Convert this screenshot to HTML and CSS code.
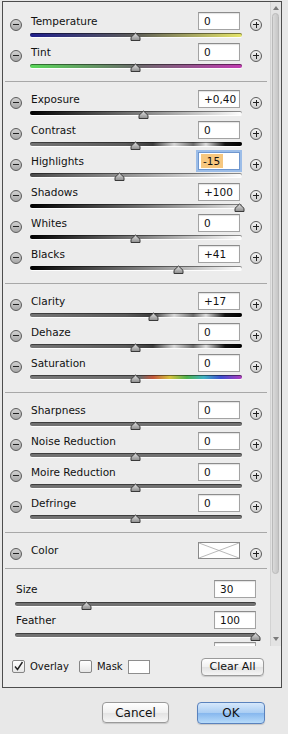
FILE: index.html
```html
<!DOCTYPE html>
<html lang="en">
<head>
    <meta charset="UTF-8">
    <title>Adjustment Brush</title>
    <link rel="stylesheet" href="styles.css">
</head>
<body>
    <svg class="defs" width="0" height="0">
        <defs>
            <linearGradient id="knob-fill" x1="0" y1="0" x2="0" y2="1">
                <stop offset="0" stop-color="#e2e2e2"/>
                <stop offset="1" stop-color="#8c8c8c"/>
            </linearGradient>
            <symbol id="knob" viewBox="0 0 11 9">
                <path d="M1 8.5V5.3L5.5 1 10 5.3v3.2z" fill="url(#knob-fill)" stroke="#3a3a3a" stroke-linejoin="round"/>
            </symbol>
        </defs>
    </svg>

    <div class="panel">
        <div class="scroll">
            <div class="content">
                <div class="group">
                    <div class="row">
                        <span class="round minus"></span>
                        <div class="ctl">
                            <div class="head"><span class="label">Temperature</span><span class="value">0</span></div>
                            <div class="track temp"><svg class="knob" style="left: 50%"><use href="#knob"/></svg></div>
                        </div>
                        <span class="round plus"></span>
                    </div>
                    <div class="row">
                        <span class="round minus"></span>
                        <div class="ctl">
                            <div class="head"><span class="label">Tint</span><span class="value">0</span></div>
                            <div class="track tint"><svg class="knob" style="left: 50%"><use href="#knob"/></svg></div>
                        </div>
                        <span class="round plus"></span>
                    </div>
                </div>
                <div class="sep"></div>
                <div class="group">
                    <div class="row">
                        <span class="round minus"></span>
                        <div class="ctl">
                            <div class="head"><span class="label">Exposure</span><span class="value">+0,40</span></div>
                            <div class="track mono"><svg class="knob" style="left: 54%"><use href="#knob"/></svg></div>
                        </div>
                        <span class="round plus"></span>
                    </div>
                    <div class="row">
                        <span class="round minus"></span>
                        <div class="ctl">
                            <div class="head"><span class="label">Contrast</span><span class="value">0</span></div>
                            <div class="track bands"><svg class="knob" style="left: 50%"><use href="#knob"/></svg></div>
                        </div>
                        <span class="round plus"></span>
                    </div>
                    <div class="row">
                        <span class="round minus"></span>
                        <div class="ctl">
                            <div class="head"><span class="label">Highlights</span><span class="value focus"><span class="selected">-15</span></span></div>
                            <div class="track light"><svg class="knob" style="left: 42.5%"><use href="#knob"/></svg></div>
                        </div>
                        <span class="round plus"></span>
                    </div>
                    <div class="row">
                        <span class="round minus"></span>
                        <div class="ctl">
                            <div class="head"><span class="label">Shadows</span><span class="value">+100</span></div>
                            <div class="track dark"><svg class="knob" style="left: 99%"><use href="#knob"/></svg></div>
                        </div>
                        <span class="round plus"></span>
                    </div>
                    <div class="row">
                        <span class="round minus"></span>
                        <div class="ctl">
                            <div class="head"><span class="label">Whites</span><span class="value">0</span></div>
                            <div class="track mono"><svg class="knob" style="left: 50%"><use href="#knob"/></svg></div>
                        </div>
                        <span class="round plus"></span>
                    </div>
                    <div class="row">
                        <span class="round minus"></span>
                        <div class="ctl">
                            <div class="head"><span class="label">Blacks</span><span class="value">+41</span></div>
                            <div class="track mono"><svg class="knob" style="left: 70.5%"><use href="#knob"/></svg></div>
                        </div>
                        <span class="round plus"></span>
                    </div>
                </div>
                <div class="sep"></div>
                <div class="group">
                    <div class="row">
                        <span class="round minus"></span>
                        <div class="ctl">
                            <div class="head"><span class="label">Clarity</span><span class="value">+17</span></div>
                            <div class="track bands"><svg class="knob" style="left: 58.5%"><use href="#knob"/></svg></div>
                        </div>
                        <span class="round plus"></span>
                    </div>
                    <div class="row">
                        <span class="round minus"></span>
                        <div class="ctl">
                            <div class="head"><span class="label">Dehaze</span><span class="value">0</span></div>
                            <div class="track bands"><svg class="knob" style="left: 50%"><use href="#knob"/></svg></div>
                        </div>
                        <span class="round plus"></span>
                    </div>
                    <div class="row">
                        <span class="round minus"></span>
                        <div class="ctl">
                            <div class="head"><span class="label">Saturation</span><span class="value">0</span></div>
                            <div class="track sat"><svg class="knob" style="left: 50%"><use href="#knob"/></svg></div>
                        </div>
                        <span class="round plus"></span>
                    </div>
                </div>
                <div class="sep"></div>
                <div class="group">
                    <div class="row">
                        <span class="round minus"></span>
                        <div class="ctl">
                            <div class="head"><span class="label">Sharpness</span><span class="value">0</span></div>
                            <div class="track plain"><svg class="knob" style="left: 50%"><use href="#knob"/></svg></div>
                        </div>
                        <span class="round plus"></span>
                    </div>
                    <div class="row">
                        <span class="round minus"></span>
                        <div class="ctl">
                            <div class="head"><span class="label">Noise Reduction</span><span class="value">0</span></div>
                            <div class="track plain"><svg class="knob" style="left: 50%"><use href="#knob"/></svg></div>
                        </div>
                        <span class="round plus"></span>
                    </div>
                    <div class="row">
                        <span class="round minus"></span>
                        <div class="ctl">
                            <div class="head"><span class="label">Moire Reduction</span><span class="value">0</span></div>
                            <div class="track plain"><svg class="knob" style="left: 50%"><use href="#knob"/></svg></div>
                        </div>
                        <span class="round plus"></span>
                    </div>
                    <div class="row">
                        <span class="round minus"></span>
                        <div class="ctl">
                            <div class="head"><span class="label">Defringe</span><span class="value">0</span></div>
                            <div class="track plain"><svg class="knob" style="left: 50%"><use href="#knob"/></svg></div>
                        </div>
                        <span class="round plus"></span>
                    </div>
                </div>
                <div class="sep"></div>
                <div class="row row-color">
                    <span class="round minus"></span>
                    <div class="ctl">
                        <div class="head">
                            <span class="label">Color</span>
                            <svg class="swatch" width="42" height="17" viewBox="0 0 42 17">
                                <rect x="0.5" y="0.5" width="41" height="16" fill="#fff" stroke="#8a8a8a"/>
                                <path d="M1 1L41 16M41 1L1 16" stroke="#a8a8a8" stroke-width="0.8"/>
                            </svg>
                        </div>
                    </div>
                    <span class="round plus"></span>
                </div>
                <div class="sep"></div>
                <div class="brush">
                    <div class="brush-row">
                        <div class="head"><span class="label">Size</span><span class="value">30</span></div>
                        <div class="track plain"><svg class="knob" style="left: 30%"><use href="#knob"/></svg></div>
                    </div>
                    <div class="brush-row">
                        <div class="head"><span class="label">Feather</span><span class="value">100</span></div>
                        <div class="track plain"><svg class="knob" style="left: 100%"><use href="#knob"/></svg></div>
                    </div>
                    <!-- next row only peeks in under the fold -->
                    <div class="brush-row">
                        <div class="head"><span class="label"></span><span class="value"></span></div>
                    </div>
                </div>
            </div>
            <div class="scrollbar">
                <span class="sb-up"></span>
                <span class="sb-thumb"></span>
                <span class="sb-rest"></span>
                <span class="sb-down"></span>
            </div>
        </div>
        <div class="footer">
            <label class="check">
                <span class="box">
                    <svg width="11" height="11" viewBox="0 0 11 11"><path d="M2 5.5L4.5 8.5 9.5 1" fill="none" stroke="#222" stroke-width="1.4"/></svg>
                </span>
                Overlay
            </label>
            <label class="check"><span class="box"></span>Mask</label>
            <span class="mask-color"></span>
            <button class="btn btn-small">Clear All</button>
        </div>
    </div>

    <div class="actions">
        <button class="btn">Cancel</button>
        <button class="btn btn-ok">OK</button>
    </div>
</body>
</html>
```

FILE: styles.css
```css
html, body {
    margin: 0;
    padding: 0;
}

body {
    background-color: #e8e8e8;
    font-family: "DejaVu Sans", sans-serif;
    font-size: 10.5px;
    color: #111;
    width: 288px;
    height: 734px;
    overflow: hidden;
}

.defs {
    position: absolute;
    width: 0;
    height: 0;
}

.panel {
    margin: 1px 0 0 2px;
    width: 280px;
    height: 687px;
    border: 1px solid #4d4d4d;
    box-sizing: border-box;
    background-color: #ececec;
    display: flex;
    flex-direction: column;
}

.scroll {
    display: flex;
    height: 644px;
    flex: none;
    overflow: hidden;
}

.content {
    width: 267px;
    padding-top: 7px;
    box-sizing: border-box;
}

/* slider rows */
.row {
    display: grid;
    grid-template-columns: 27px 212px 1fr;
    height: 31px;
    padding-top: 3px;
    box-sizing: border-box;
}

.row-color {
    height: 20px;
}

.round {
    width: 12px;
    height: 12px;
    border-radius: 50%;
    border: 1px solid #5c5c5c;
    box-sizing: border-box;
    position: relative;
    margin-top: 7px;
}

.minus {
    margin-left: 7px;
    background: linear-gradient(#d2d2d2, #a8a8a8);
}

.plus {
    margin-left: 8px;
    background: linear-gradient(#f4f4f4, #cfcfcf);
}

.round::before {
    content: "";
    position: absolute;
    left: 2px;
    top: 4px;
    width: 6px;
    height: 1px;
    background-color: #222;
}

.plus::after {
    content: "";
    position: absolute;
    left: 4.5px;
    top: 1.5px;
    width: 1px;
    height: 6px;
    background-color: #222;
}

.head {
    display: flex;
    justify-content: space-between;
    align-items: center;
    height: 18px;
    padding-right: 2px;
}

.label {
    padding-left: 1px;
}

.value {
    width: 42px;
    height: 18px;
    box-sizing: border-box;
    background-color: #fff;
    border: 1px solid #a3a3a3;
    border-top-color: #8c8c8c;
    box-shadow: inset 0 1px 1px rgba(0, 0, 0, 0.12);
    padding-left: 5px;
    line-height: 16px;
}

.value.focus {
    border-color: #6f97cf;
    box-shadow: 0 0 0 2px #9cbde8;
    padding-left: 2px;
}

.selected {
    display: inline-block;
    background-color: #f6c77f;
    line-height: 14px;
    padding: 0 3px 0 2px;
}

.swatch {
    display: block;
}

.track {
    position: relative;
    height: 4px;
    margin-top: 3px;
    border-radius: 2px;
    box-shadow: inset 0 1px 0 rgba(0, 0, 0, 0.45), 0 1px 0 rgba(255, 255, 255, 0.9);
}

.knob {
    position: absolute;
    top: -1px;
    width: 11px;
    height: 9px;
    margin-left: -6px;
}

.temp { background: linear-gradient(to right, #1f1f8c, #5e5e58 50%, #e6e66a); }
.tint { background: linear-gradient(to right, #5ad85a, #6a6a6a 50%, #c23cb2); }
.mono { background: linear-gradient(to right, #000, #7a7a7a 50%, #fff); }
.light { background: linear-gradient(to right, #4a4a4a, #9a9a9a 50%, #fcfcfc); }
.dark { background: linear-gradient(to right, #000, #6a6a6a 50%, #e4e4e4); }
.plain { background-color: #727272; }

.bands {
    background: linear-gradient(to right, #747474 0%, #5c5c5c 45%, #3c3c3c 58%, #d8d8d8 68%, #6a6a6a 77%, #dcdcdc 83%, #111 92%, #000 100%);
}

.sat {
    background: linear-gradient(to right, #777 0%, #6c6c6c 52%, #c4583c 58%, #d6c23e 66%, #4eb24e 74%, #3fb2c4 82%, #3e4fd0 90%, #b03cc0 100%);
}

.sep {
    height: 1px;
    margin: 10px 3px 5px 2px;
    background-color: #a8a8a8;
}

/* brush section */
.brush {
    padding-top: 3px;
}

.brush-row {
    height: 31px;
    padding: 3px 1px 0 12px;
    box-sizing: border-box;
    width: 254px;
}

.brush-row .head {
    padding-right: 0;
}

.brush-row .track {
    margin-top: 4px;
}

/* scrollbar */
.scrollbar {
    width: 11px;
    display: flex;
    flex-direction: column;
    background-color: #e3e3e3;
    border-left: 1px solid #d2d2d2;
    box-sizing: border-box;
}

.sb-up, .sb-down {
    height: 11px;
    flex: none;
    position: relative;
}

.sb-up::before, .sb-down::before {
    content: "";
    position: absolute;
    left: 2px;
    border-left: 3px solid transparent;
    border-right: 3px solid transparent;
}

.sb-up::before {
    top: 4px;
    border-bottom: 4px solid #7a7a7a;
}

.sb-down::before {
    top: 2px;
    border-top: 4px solid #7a7a7a;
}

.sb-thumb {
    height: 559px;
    flex: none;
    margin: 0 2px 0 1px;
    border-radius: 4px;
    border: 1px solid #b9b9b9;
    background: linear-gradient(to right, #dadada, #c6c6c6);
}

.sb-rest {
    flex: 1;
}

/* footer */
.footer {
    flex: 1;
    display: flex;
    align-items: center;
    padding: 0 17px 0 9px;
    font-size: 10px;
}

.check {
    display: flex;
    align-items: center;
    gap: 5px;
    margin-right: 10px;
}

.check + .check {
    margin-right: 5px;
}

.box {
    width: 13px;
    height: 13px;
    box-sizing: border-box;
    border: 1px solid #858585;
    border-radius: 2px;
    background: linear-gradient(#ffffff, #e6e6e6);
    display: flex;
    align-items: center;
    justify-content: center;
}

.mask-color {
    width: 22px;
    height: 14px;
    box-sizing: border-box;
    background-color: #fff;
    border: 1px solid #8e8e8e;
}

.btn {
    font-family: "DejaVu Sans", sans-serif;
    font-size: 12px;
    color: #111;
    width: 67px;
    height: 21px;
    padding: 0;
    border: 1px solid #9a9a9a;
    border-radius: 4px;
    background: linear-gradient(#ffffff, #f0f0f0 50%, #e2e2e2 51%, #f6f6f6);
    box-shadow: 0 1px 1px rgba(0, 0, 0, 0.15);
}

.btn-small {
    margin-left: auto;
    width: 63px;
    height: 18px;
    font-size: 11px;
}

.btn-ok {
    width: 68px;
    height: 22px;
    border-color: #5a82bd;
    background: linear-gradient(#d6e8fb, #a9cdf3 50%, #86b7ee 51%, #b7dbfa);
}

.actions {
    display: flex;
    justify-content: flex-end;
    gap: 28px;
    padding: 14px 23px 0 0;
}
```
